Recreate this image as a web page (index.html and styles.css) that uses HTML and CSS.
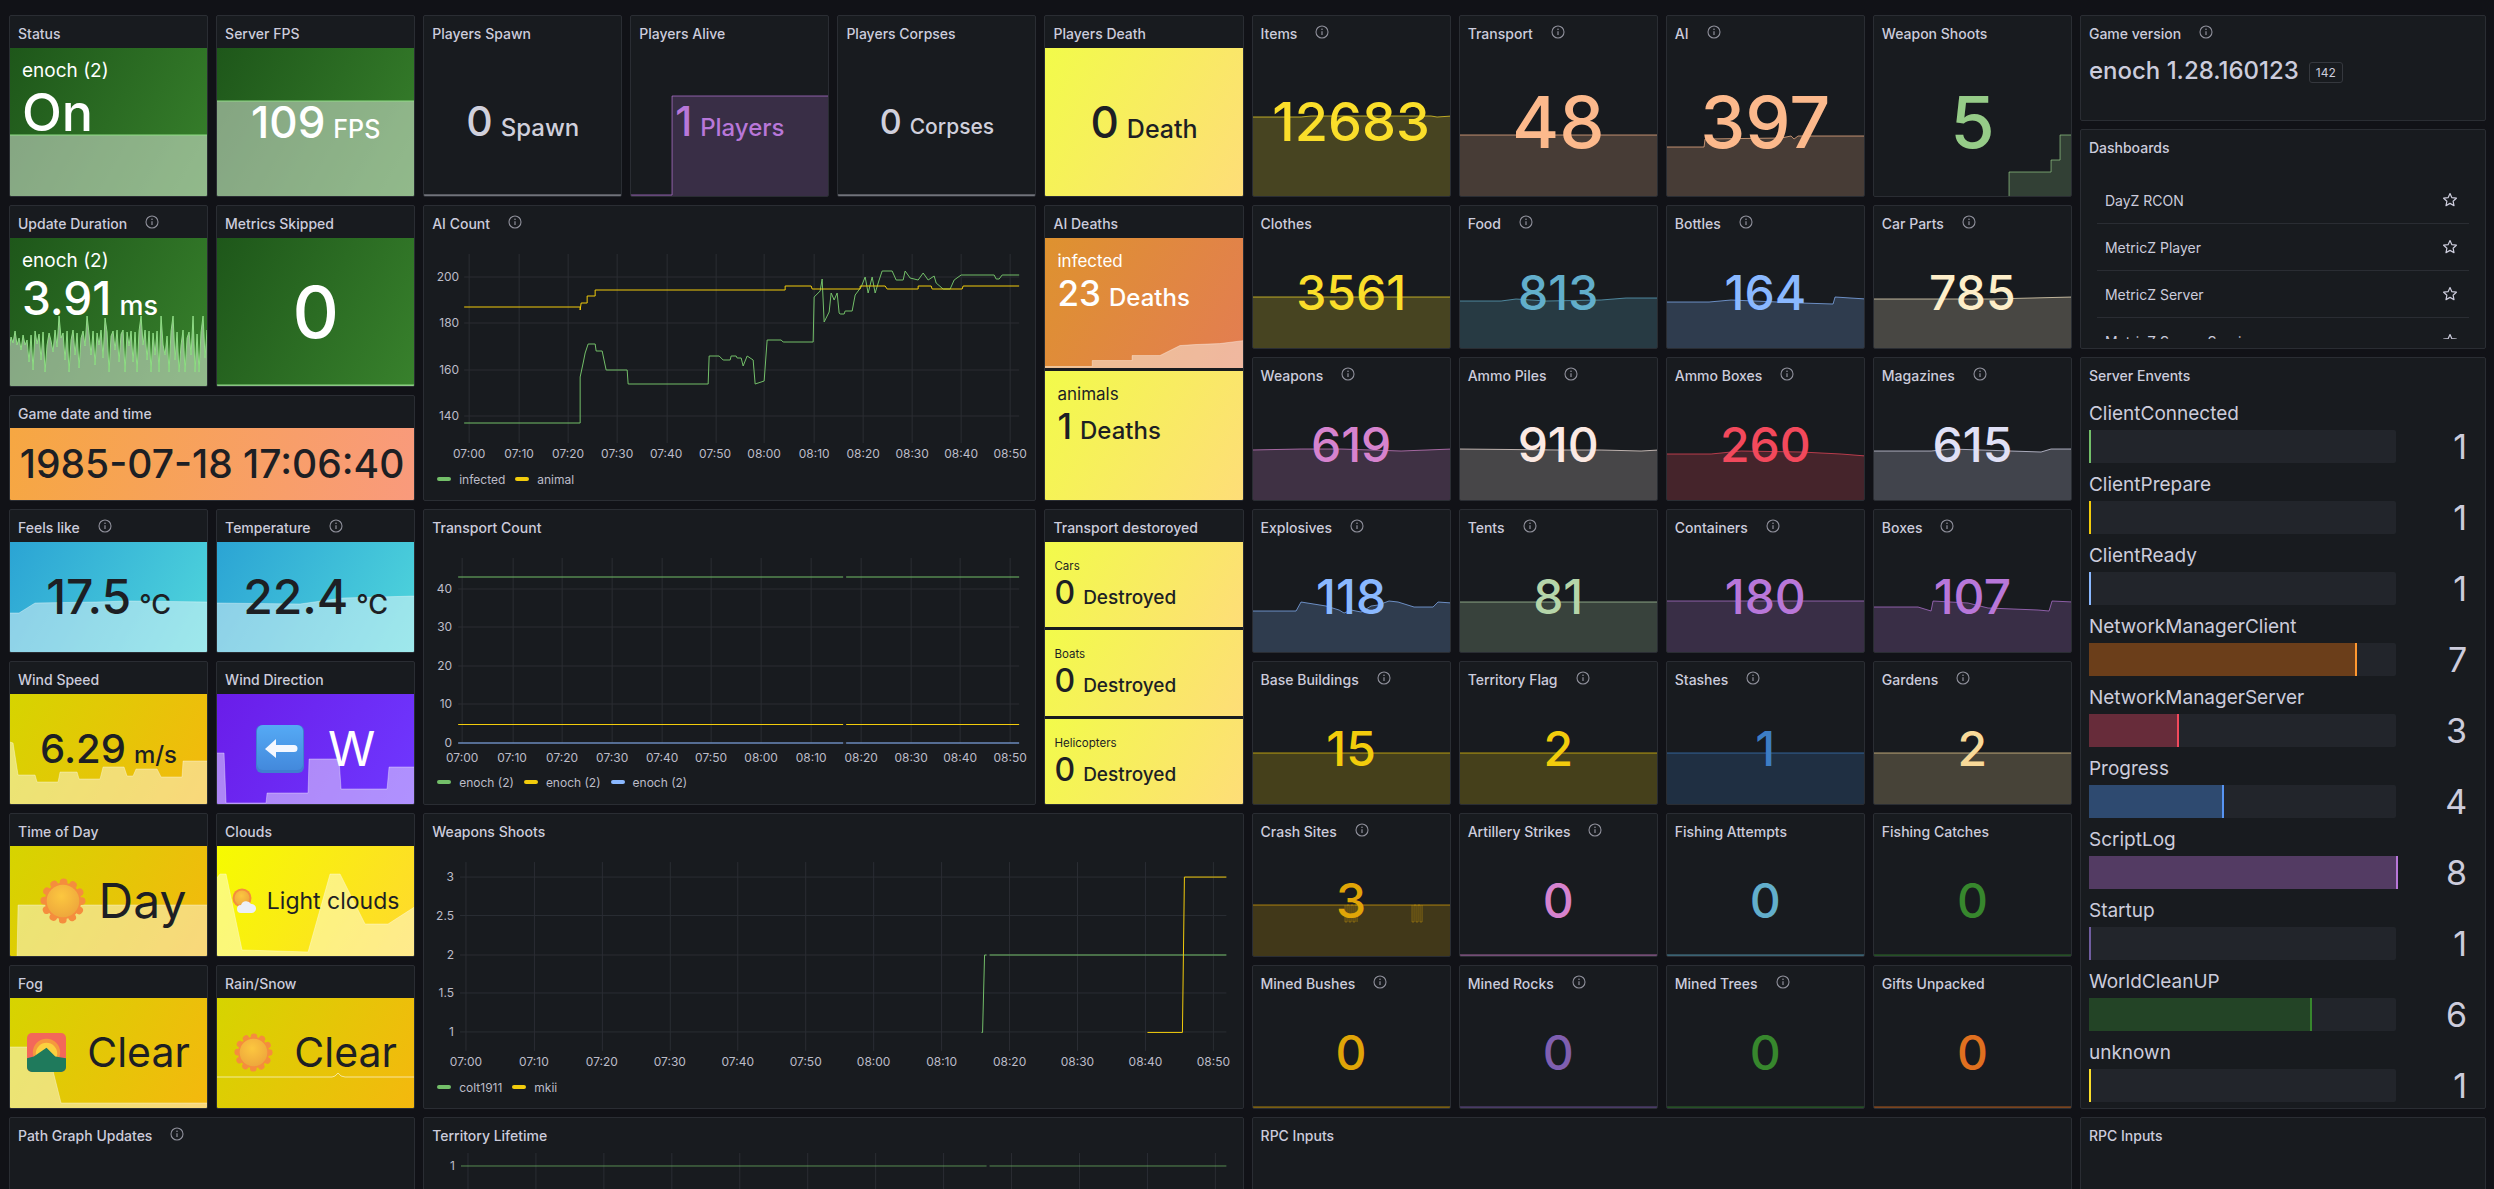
FILE: index.html
```html
<!DOCTYPE html>
<html lang="en">
<head>
    <meta charset="UTF-8">
    <meta name="viewport" content="width=device-width, initial-scale=1.0">
    <title>DayZ Server Overview</title>
    <link rel="stylesheet" href="styles.css">
</head>
<body>
    <svg class="defs" aria-hidden="true">
        <defs>
            <radialGradient id="sunCore" cx="45%" cy="35%" r="70%">
                <stop offset="0" stop-color="#fcc73f"/>
                <stop offset="1" stop-color="#eda53c"/>
            </radialGradient>
            <linearGradient id="keyBlue" x1="0" y1="0" x2="0" y2="1">
                <stop offset="0" stop-color="#55aaf5"/>
                <stop offset="1" stop-color="#4389dc"/>
            </linearGradient>
            <symbol id="i-info" viewBox="0 0 14 14">
                <circle cx="7" cy="7" r="6" fill="none" stroke="currentColor" stroke-width="1.1"/>
                <path d="M7 6.3v3.6" stroke="currentColor" stroke-width="1.2"/>
                <circle cx="7" cy="4.3" r=".8" fill="currentColor"/>
            </symbol>
            <symbol id="i-star" viewBox="0 0 16 16">
                <path d="M8 1.6l1.9 4.1 4.5.5-3.3 3 .9 4.4L8 11.4l-4 2.2.9-4.4-3.3-3 4.5-.5z" fill="none" stroke="currentColor" stroke-width="1.2" stroke-linejoin="round"/>
            </symbol>
            <symbol id="i-sun" viewBox="0 0 48 48">
                <circle cx="24" cy="24" r="19" fill="#f58d3d"/>
                <circle cx="24" cy="24" r="19.5" fill="none" stroke="#f58d3d" stroke-width="8" stroke-linecap="round" stroke-dasharray="0.1 10.11"/>
                <circle cx="24" cy="24" r="17" fill="url(#sunCore)"/>
            </symbol>
            <symbol id="i-sunrise" viewBox="0 0 40 40">
                <rect width="40" height="40" rx="5" fill="#f3685a"/>
                <circle cx="20" cy="20" r="14" fill="#f59a3d"/>
                <circle cx="20" cy="21" r="11" fill="#fbd03f"/>
                <path d="M0 26l7-2 13-9 9 9 11 2v9a5 5 0 0 1-5 5H5a5 5 0 0 1-5-5z" fill="#1f7a5c"/>
            </symbol>
            <symbol id="i-cloudsun" viewBox="0 0 24 28">
                <circle cx="10" cy="11" r="9.5" fill="#f58d3d"/>
                <circle cx="10" cy="11" r="7.5" fill="url(#sunCore)"/>
                <path d="M9 26a4 4 0 0 1 0-8 5.500 5.500 0 0 1 10-1 4.500 4.500 0 0 1 1 9z" fill="#eceff6"/>
            </symbol>
            <symbol id="i-arrowkey" viewBox="0 0 48 48">
                <rect x="0" y="0" width="48" height="48" rx="6" fill="#3f7fd0"/>
                <rect x="1" y="0" width="46" height="45" rx="6" fill="url(#keyBlue)"/>
                <path d="M9 24l11-10v6h18a3 3 0 0 1 0 7H20v6z" fill="#f4f7ff"/>
            </symbol>
        </defs>
    </svg>

    <main class="dash">

        <section class="panel x0 y0 w1 h5">
            <header class="ptitle">Status</header>
            <div class="stat named bg-green">
                <svg class="spark spark-w green-line" viewBox="10 48 197 148"><path d="M8 198V135H209V198Z"/></svg>
                <div class="name">enoch (2)</div>
                <div class="val f52">On</div>
            </div>
        </section>
        <section class="panel x1 y0 w1 h5">
            <header class="ptitle">Server FPS</header>
            <div class="stat bg-green">
                <svg class="spark spark-w green-line" viewBox="217 48 197 148"><path d="M215 198V101H416V198Z"/></svg>
                <div class="val f44">109<span class="unit u25">FPS</span></div>
            </div>
        </section>
        <section class="panel x2 y0 w1 h5">
            <header class="ptitle">Players Spawn</header>
            <div class="stat c-text">
                <svg class="spark" viewBox="424 48 197 148"><path d="M422 198V195H623V198Z"/></svg>
                <div class="val f41">0<span class="unit u24">Spawn</span></div>
            </div>
        </section>
        <section class="panel x3 y0 w1 h5">
            <header class="ptitle">Players Alive</header>
            <div class="stat c-purple">
                <svg class="spark" viewBox="631 48 197 148"><path d="M629 198V195H672V96H830V198Z"/></svg>
                <div class="val f41">1<span class="unit u24">Players</span></div>
            </div>
        </section>
        <section class="panel x4 y0 w1 h5">
            <header class="ptitle">Players Corpses</header>
            <div class="stat c-text">
                <svg class="spark" viewBox="838 48 197 148"><path d="M836 198V195H1037V198Z"/></svg>
                <div class="val f34">0<span class="unit u21">Corpses</span></div>
            </div>
        </section>
        <section class="panel x5 y0 w1 h5">
            <header class="ptitle">Players Death</header>
            <div class="stat bg-lemon c-dark">
                <div class="val f44">0<span class="unit u25">Death</span></div>
            </div>
        </section>
        <section class="panel x6 y0 w1 h5">
            <header class="ptitle">Items <svg class="info"><use href="#i-info"/></svg></header>
            <div class="stat c-yellow">
                <svg class="spark" viewBox="1252 48 197 148"><path d="M1250 198V117H1300L1310 116H1430L1436 117L1451 116V198Z"/></svg>
                <div class="val f54">12683</div>
            </div>
        </section>
        <section class="panel x7 y0 w1 h5">
            <header class="ptitle">Transport <svg class="info"><use href="#i-info"/></svg></header>
            <div class="stat c-peach">
                <svg class="spark" viewBox="1459 48 197 148"><path d="M1457 198V135H1658V198Z"/></svg>
                <div class="val f72">48</div>
            </div>
        </section>
        <section class="panel x8 y0 w1 h5">
            <header class="ptitle">AI <svg class="info"><use href="#i-info"/></svg></header>
            <div class="stat c-peach">
                <svg class="spark" viewBox="1666 48 197 148"><path d="M1664 198V147H1703L1704 139L1780 138L1790 136L1793 139L1797 136H1865V198Z"/></svg>
                <div class="val f72">397</div>
            </div>
        </section>
        <section class="panel x9 y0 w1 h5">
            <header class="ptitle">Weapon Shoots</header>
            <div class="stat c-lime">
                <svg class="spark" viewBox="1873 48 197 148"><path d="M2008 198V172H2050V160H2059V135H2072V198Z"/></svg>
                <div class="val f72">5</div>
            </div>
        </section>
        <section class="panel x10 y0 w2 h3">
            <header class="ptitle">Game version <svg class="info"><use href="#i-info"/></svg></header>
            <div class="version">
                <span>enoch 1.28.160123</span>
                <span class="badge">142</span>
            </div>
        </section>
        <section class="panel x10 y3 w2 h6">
            <header class="ptitle">Dashboards</header>
            <ul class="dashlist">
                <li>DayZ RCON <svg class="star"><use href="#i-star"/></svg></li>
                <li>MetricZ Player <svg class="star"><use href="#i-star"/></svg></li>
                <li>MetricZ Server <svg class="star"><use href="#i-star"/></svg></li>
                <li>MetricZ Server Services <svg class="star"><use href="#i-star"/></svg></li>
            </ul>
        </section>

        <section class="panel x0 y5 w1 h5">
            <header class="ptitle">Update Duration <svg class="info"><use href="#i-info"/></svg></header>
            <div class="stat named bg-green">
                <svg class="spark spark-w green-line" viewBox="10 238 197 148"><path d="M8 388V356L11 337 13 343 15 331 17 345 19 338 21 350 23 335 25 345 27 340 29 362 31 335 33 370 35 331 37 344 39 334 41 360 43 332 45 372 47 345 49 333 51 341 53 352 55 330 57 347 59 316 61 338 63 333 65 360 67 331 69 372 71 340 73 330 75 355 77 333 79 368 81 338 83 331 85 346 87 316 89 334 91 355 93 331 95 365 97 333 99 345 101 330 103 358 105 318 107 332 109 372 111 336 113 331 115 350 117 330 119 362 121 334 123 330 125 372 127 332 129 346 131 331 133 362 135 332 137 372 139 331 141 316 143 345 145 330 147 360 149 331 151 372 153 333 155 355 157 331 159 372 161 316 163 345 165 355 167 336 169 372 171 331 173 316 175 360 177 332 179 372 181 345 183 330 185 372 187 338 189 332 191 355 193 316 195 372 197 334 199 372 201 332 203 316 205 358 207 330 209 372V388Z"/></svg>
                <div class="name">enoch (2)</div>
                <div class="val f46 pull3">3.91<span class="unit u27">ms</span></div>
            </div>
        </section>
        <section class="panel x1 y5 w1 h5">
            <header class="ptitle">Metrics Skipped</header>
            <div class="stat bg-green">
                <svg class="spark spark-w green-line" viewBox="217 238 197 148"><path d="M215 388V385H416V388Z"/></svg>
                <div class="val f72 white">0</div>
            </div>
        </section>

        <section class="panel x2 y5 w3 h8">
            <header class="ptitle">AI Count <svg class="info"><use href="#i-info"/></svg></header>
            <svg class="chart ai-chart" viewBox="424 238 611 231">
                <path class="grid" d="M464 277H1019M464 323H1019M464 370H1019M464 416H1019M469 254V443M519 254V443M568 254V443M617 254V443M667 254V443M716 254V443M764 254V443M814 254V443M863 254V443M912 254V443M961 254V443M1010 254V443"/>
                <g class="axis">
                    <text class="end" x="459" y="281">200</text>
                    <text class="end" x="459" y="327">180</text>
                    <text class="end" x="459" y="374">160</text>
                    <text class="end" x="459" y="420">140</text>
                    <text x="469" y="458">07:00</text>
                    <text x="519" y="458">07:10</text>
                    <text x="568" y="458">07:20</text>
                    <text x="617" y="458">07:30</text>
                    <text x="666" y="458">07:40</text>
                    <text x="715" y="458">07:50</text>
                    <text x="764" y="458">08:00</text>
                    <text x="814" y="458">08:10</text>
                    <text x="863" y="458">08:20</text>
                    <text x="912" y="458">08:30</text>
                    <text x="961" y="458">08:40</text>
                    <text x="1010" y="458">08:50</text>
                </g>
                <polyline class="line l-green" points="464,423 580,423 580,377 583,363 585,353 588,344 595,344 596,351 602,351 606,370 627,370 628,384 708,384 709,356 719,356 723,360 730,360 731,356 736,356 737,358 741,358 743,366 747,356 753,360 755,384 764,381 767,340 781,340 783,342 813,342 814,297 820,291 822,279 824,322 829,312 831,293 834,300 837,293 839,313 840,314 844,314 845,311 852,311 855,295 861,287 865,277 868,293 872,277 875,293 879,280 882,271 892,271 896,280 903,280 905,271 910,278 918,280 923,273 928,280 934,276 936,283 943,289 950,289 954,280 961,275 994,275 996,279 999,279 1002,275 1019,275"/>
                <polyline class="line l-yellow" points="464,307 580,307 580,310 581,303 587,303 587,296 595,296 595,290 785,290 785,286 811,286 812,289 860,289 860,286 885,286 887,289 918,289 918,286 931,286 932,289 962,289 963,286 1019,286"/>
            </svg>
            <div class="legend">
                <span class="key"><i class="swatch k-green"></i>infected</span>
                <span class="key"><i class="swatch k-yellow"></i>animal</span>
            </div>
        </section>

        <section class="panel x5 y5 w1 h8">
            <header class="ptitle">AI Deaths</header>
            <div class="stack">
                <div class="stat named bg-orange">
                    <svg class="spark spark-w" viewBox="1045 238 197 130"><path d="M1043 370V367H1092V361H1132V356H1160L1174 349 1180 346 1195 345 1220 344 1244 341V370Z"/></svg>
                    <div class="name n18">infected</div>
                    <div class="val f35">23<span class="unit u24">Deaths</span></div>
                </div>
                <div class="stat named bg-lemon c-dark">
                    <div class="name n18">animals</div>
                    <div class="val f35">1<span class="unit u24">Deaths</span></div>
                </div>
            </div>
        </section>

        <section class="panel x0 y10 w2 h3">
            <header class="ptitle">Game date and time</header>
            <div class="stat bg-sunset c-dark">
                <div class="val f39">1985-07-18 17:06:40</div>
            </div>
        </section>

        <section class="panel x6 y5 w1 h4">
            <header class="ptitle">Clothes</header>
            <div class="stat c-yellow">
                <svg class="spark" viewBox="1252 238 197 110"><path d="M1250 350V297H1450V350Z"/></svg>
                <div class="val f48">3561</div>
            </div>
        </section>
        <section class="panel x7 y5 w1 h4">
            <header class="ptitle">Food <svg class="info"><use href="#i-info"/></svg></header>
            <div class="stat c-teal">
                <svg class="spark" viewBox="1459 238 197 110"><path d="M1457 350V301H1500L1515 299 1530 300 1545 301 1600 300 1625 298H1658V350Z"/></svg>
                <div class="val f48">813</div>
            </div>
        </section>
        <section class="panel x8 y5 w1 h4">
            <header class="ptitle">Bottles <svg class="info"><use href="#i-info"/></svg></header>
            <div class="stat c-blue">
                <svg class="spark" viewBox="1666 238 197 110"><path d="M1664 350V302H1708L1730 300 1800 303 1832 304 1834 297 1865 299V350Z"/></svg>
                <div class="val f48">164</div>
            </div>
        </section>
        <section class="panel x9 y5 w1 h4">
            <header class="ptitle">Car Parts <svg class="info"><use href="#i-info"/></svg></header>
            <div class="stat c-cream">
                <svg class="spark" viewBox="1873 238 197 110"><path d="M1871 350V299H1990L2072 297V350Z"/></svg>
                <div class="val f48">785</div>
            </div>
        </section>

        <section class="panel x6 y9 w1 h4">
            <header class="ptitle">Weapons <svg class="info"><use href="#i-info"/></svg></header>
            <div class="stat c-orchid">
                <svg class="spark" viewBox="1252 390 197 110"><path d="M1250 502V450L1300 449 1340 449 1400 451 1451 449V502Z"/></svg>
                <div class="val f48">619</div>
            </div>
        </section>
        <section class="panel x7 y9 w1 h4">
            <header class="ptitle">Ammo Piles <svg class="info"><use href="#i-info"/></svg></header>
            <div class="stat c-rose">
                <svg class="spark" viewBox="1459 390 197 110"><path d="M1457 502V449L1560 450 1600 450 1640 451 1658 450V502Z"/></svg>
                <div class="val f48">910</div>
            </div>
        </section>
        <section class="panel x8 y9 w1 h4">
            <header class="ptitle">Ammo Boxes <svg class="info"><use href="#i-info"/></svg></header>
            <div class="stat c-red">
                <svg class="spark" viewBox="1666 390 197 110"><path d="M1664 502V454H1710L1740 451 1800 452 1840 454 1865 456V502Z"/></svg>
                <div class="val f48">260</div>
            </div>
        </section>
        <section class="panel x9 y9 w1 h4">
            <header class="ptitle">Magazines <svg class="info"><use href="#i-info"/></svg></header>
            <div class="stat c-lavender">
                <svg class="spark" viewBox="1873 390 197 110"><path d="M1871 502V451H1930L1950 449 2040 452 2050 449H2072V502Z"/></svg>
                <div class="val f48">615</div>
            </div>
        </section>

        <section class="panel x10 y9 w2 h20">
            <header class="ptitle">Server Envents</header>
            <div class="bars">
                <div class="barrow"><div class="barname">ClientConnected</div><div class="barline"><div class="track"><div class="fill b-green" style="width:0%"></div></div><span class="barval">1</span></div></div>
                <div class="barrow"><div class="barname">ClientPrepare</div><div class="barline"><div class="track"><div class="fill b-yellow" style="width:0%"></div></div><span class="barval">1</span></div></div>
                <div class="barrow"><div class="barname">ClientReady</div><div class="barline"><div class="track"><div class="fill b-sky" style="width:0%"></div></div><span class="barval">1</span></div></div>
                <div class="barrow"><div class="barname">NetworkManagerClient</div><div class="barline"><div class="track"><div class="fill b-orange" style="width:86.600%"></div></div><span class="barval">7</span></div></div>
                <div class="barrow"><div class="barname">NetworkManagerServer</div><div class="barline"><div class="track"><div class="fill b-red" style="width:28.700%"></div></div><span class="barval">3</span></div></div>
                <div class="barrow"><div class="barname">Progress</div><div class="barline"><div class="track"><div class="fill b-blue" style="width:43.200%"></div></div><span class="barval">4</span></div></div>
                <div class="barrow"><div class="barname">ScriptLog</div><div class="barline"><div class="track"><div class="fill b-purple" style="width:100%"></div></div><span class="barval">8</span></div></div>
                <div class="barrow"><div class="barname">Startup</div><div class="barline"><div class="track"><div class="fill b-violet" style="width:0%"></div></div><span class="barval">1</span></div></div>
                <div class="barrow"><div class="barname">WorldCleanUP</div><div class="barline"><div class="track"><div class="fill b-forest" style="width:72%"></div></div><span class="barval">6</span></div></div>
                <div class="barrow"><div class="barname">unknown</div><div class="barline"><div class="track"><div class="fill b-lemon" style="width:0%"></div></div><span class="barval">1</span></div></div>
            </div>
        </section>

        <section class="panel x0 y13 w1 h4">
            <header class="ptitle">Feels like <svg class="info"><use href="#i-info"/></svg></header>
            <div class="stat bg-cyan c-dark">
                <svg class="spark spark-w" viewBox="10 542 197 110"><path d="M8 654V613H19L35 603 96 602 129 601 209 602V654Z"/></svg>
                <div class="val f48">17.5<span class="unit u27">°C</span></div>
            </div>
        </section>
        <section class="panel x1 y13 w1 h4">
            <header class="ptitle">Temperature <svg class="info"><use href="#i-info"/></svg></header>
            <div class="stat bg-cyan c-dark">
                <svg class="spark spark-w" viewBox="217 542 197 110"><path d="M215 654V603L300 604 343 598 416 596V654Z"/></svg>
                <div class="val f48">22.4<span class="unit u27">°C</span></div>
            </div>
        </section>

        <section class="panel x2 y13 w3 h8">
            <header class="ptitle">Transport Count</header>
            <svg class="chart tr-chart" viewBox="424 542 611 230">
                <path class="grid" d="M458 589H1019M458 627H1019M458 666H1019M458 704H1019M458 743H1019M462 558V743M513 558V743M562 558V743M612 558V743M662 558V743M711 558V743M761 558V743M811 558V743M861 558V743M911 558V743M960 558V743M1010 558V743"/>
                <g class="axis">
                    <text class="end" x="452" y="593">40</text>
                    <text class="end" x="452" y="631">30</text>
                    <text class="end" x="452" y="670">20</text>
                    <text class="end" x="452" y="708">10</text>
                    <text class="end" x="452" y="747">0</text>
                    <text x="462" y="762">07:00</text>
                    <text x="512" y="762">07:10</text>
                    <text x="562" y="762">07:20</text>
                    <text x="612" y="762">07:30</text>
                    <text x="662" y="762">07:40</text>
                    <text x="711" y="762">07:50</text>
                    <text x="761" y="762">08:00</text>
                    <text x="811" y="762">08:10</text>
                    <text x="861" y="762">08:20</text>
                    <text x="911" y="762">08:30</text>
                    <text x="960" y="762">08:40</text>
                    <text x="1010" y="762">08:50</text>
                </g>
                <path class="line l-green" d="M458 577H843M846 577H1019"/>
                <path class="line l-yellow" d="M458 724.500H843M846 724.500H1019"/>
                <path class="line l-sky" d="M458 743H843M846 743H1019"/>
            </svg>
            <div class="legend">
                <span class="key"><i class="swatch k-green"></i>enoch (2)</span>
                <span class="key"><i class="swatch k-yellow"></i>enoch (2)</span>
                <span class="key"><i class="swatch k-sky"></i>enoch (2)</span>
            </div>
        </section>

        <section class="panel x5 y13 w1 h8">
            <header class="ptitle">Transport destoroyed</header>
            <div class="stack">
                <div class="stat named bg-lemon c-dark small-stat">
                    <div class="name n12">Cars</div>
                    <div class="val f32">0<span class="unit u19">Destroyed</span></div>
                </div>
                <div class="stat named bg-lemon c-dark small-stat">
                    <div class="name n12">Boats</div>
                    <div class="val f32">0<span class="unit u19">Destroyed</span></div>
                </div>
                <div class="stat named bg-lemon c-dark small-stat">
                    <div class="name n12">Helicopters</div>
                    <div class="val f32">0<span class="unit u19">Destroyed</span></div>
                </div>
            </div>
        </section>

        <section class="panel x6 y13 w1 h4">
            <header class="ptitle">Explosives <svg class="info"><use href="#i-info"/></svg></header>
            <div class="stat c-blue">
                <svg class="spark" viewBox="1252 542 197 110"><path d="M1250 654V611H1295L1300 602 1325 606 1338 610 1343 613 1350 610 1360 612 1370 606 1377 605 1388 601 1397 602 1413 607 1432 607 1437 602 1451 603V654Z"/></svg>
                <div class="val f48">118</div>
            </div>
        </section>
        <section class="panel x7 y13 w1 h4">
            <header class="ptitle">Tents <svg class="info"><use href="#i-info"/></svg></header>
            <div class="stat c-sage">
                <svg class="spark" viewBox="1459 542 197 110"><path d="M1457 654V602H1658V654Z"/></svg>
                <div class="val f48">81</div>
            </div>
        </section>
        <section class="panel x8 y13 w1 h4">
            <header class="ptitle">Containers <svg class="info"><use href="#i-info"/></svg></header>
            <div class="stat c-purple">
                <svg class="spark" viewBox="1666 542 197 110"><path d="M1664 654V601H1865V654Z"/></svg>
                <div class="val f48">180</div>
            </div>
        </section>
        <section class="panel x9 y13 w1 h4">
            <header class="ptitle">Boxes <svg class="info"><use href="#i-info"/></svg></header>
            <div class="stat c-purple">
                <svg class="spark" viewBox="1873 542 197 110"><path d="M1871 654V607H1917L1930 611 1932 601 1967 603 1987 608 2037 610 2048 611 2051 601 2072 602V654Z"/></svg>
                <div class="val f48">107</div>
            </div>
        </section>

        <section class="panel x0 y17 w1 h4">
            <header class="ptitle">Wind Speed</header>
            <div class="stat bg-amber c-dark">
                <svg class="spark spark-w" viewBox="10 694 197 110"><path d="M8 806V742H10L13 743 18 775H35L37 782H58L60 772H77L79 779H100L103 767H124L127 776H133L136 769H157L161 777H182L183 761H209V806Z"/></svg>
                <div class="val f40">6.29<span class="unit u24">m/s</span></div>
            </div>
        </section>
        <section class="panel x1 y17 w1 h4">
            <header class="ptitle">Wind Direction</header>
            <div class="stat bg-violet white">
                <svg class="spark spark-w" viewBox="217 694 197 110"><path d="M215 806V753H224L226 803H266L267 793H308L309 759H339L341 789H387L389 767H416V806Z"/></svg>
                <div class="val f48 icon-val"><svg class="emoji e48"><use href="#i-arrowkey"/></svg>W</div>
            </div>
        </section>

        <section class="panel x6 y17 w1 h4">
            <header class="ptitle">Base Buildings <svg class="info"><use href="#i-info"/></svg></header>
            <div class="stat c-gold">
                <svg class="spark" viewBox="1252 694 197 110"><path d="M1250 806V753H1451V806Z"/></svg>
                <div class="val f48">15</div>
            </div>
        </section>
        <section class="panel x7 y17 w1 h4">
            <header class="ptitle">Territory Flag <svg class="info"><use href="#i-info"/></svg></header>
            <div class="stat c-gold">
                <svg class="spark" viewBox="1459 694 197 110"><path d="M1457 806V753H1658V806Z"/></svg>
                <div class="val f48">2</div>
            </div>
        </section>
        <section class="panel x8 y17 w1 h4">
            <header class="ptitle">Stashes <svg class="info"><use href="#i-info"/></svg></header>
            <div class="stat c-ocean">
                <svg class="spark" viewBox="1666 694 197 110"><path d="M1664 806V753H1865V806Z"/></svg>
                <div class="val f48">1</div>
            </div>
        </section>
        <section class="panel x9 y17 w1 h4">
            <header class="ptitle">Gardens <svg class="info"><use href="#i-info"/></svg></header>
            <div class="stat c-sand">
                <svg class="spark" viewBox="1873 694 197 110"><path d="M1871 806V753H2072V806Z"/></svg>
                <div class="val f48">2</div>
            </div>
        </section>

        <section class="panel x0 y21 w1 h4">
            <header class="ptitle">Time of Day</header>
            <div class="stat bg-amber c-dark">
                <svg class="spark spark-w" viewBox="10 846 197 110"><path d="M8 958H17L18 905H209V958Z"/></svg>
                <div class="val f48 icon-val"><svg class="emoji e46"><use href="#i-sun"/></svg>Day</div>
            </div>
        </section>
        <section class="panel x1 y21 w1 h4">
            <header class="ptitle">Clouds</header>
            <div class="stat bg-bright c-dark">
                <svg class="spark spark-w" viewBox="217 846 197 110"><path d="M215 958V880L220 874H226L242 950 277 951 308 952 330 874H340L365 924H388L416 906V958Z"/></svg>
                <div class="val f23 icon-val"><svg class="emoji e24"><use href="#i-cloudsun"/></svg>Light clouds</div>
            </div>
        </section>

        <section class="panel x2 y21 w4 h8">
            <header class="ptitle">Weapons Shoots</header>
            <svg class="chart we-chart" viewBox="424 846 819 231">
                <path class="grid" d="M460 877H1227M460 915.500H1227M460 955H1227M460 993H1227M460 1032H1227M466 862V1051M534.500 862V1051M602.500 862V1051M670.500 862V1051M738 862V1051M806 862V1051M874 862V1051M942 862V1051M1010 862V1051M1078 862V1051M1146 862V1051M1214 862V1051"/>
                <g class="axis">
                    <text class="end" x="454" y="881">3</text>
                    <text class="end" x="454" y="920">2.5</text>
                    <text class="end" x="454" y="959">2</text>
                    <text class="end" x="454" y="997">1.5</text>
                    <text class="end" x="454" y="1036">1</text>
                    <text x="466" y="1066">07:00</text>
                    <text x="534" y="1066">07:10</text>
                    <text x="602" y="1066">07:20</text>
                    <text x="670" y="1066">07:30</text>
                    <text x="738" y="1066">07:40</text>
                    <text x="806" y="1066">07:50</text>
                    <text x="874" y="1066">08:00</text>
                    <text x="942" y="1066">08:10</text>
                    <text x="1010" y="1066">08:20</text>
                    <text x="1078" y="1066">08:30</text>
                    <text x="1146" y="1066">08:40</text>
                    <text x="1214" y="1066">08:50</text>
                </g>
                <path class="line l-green" d="M982 1032.500H983L985 955H987M990 955H1227"/>
                <path class="line l-yellow" d="M1148 1032.500H1183L1185 877H1227"/>
            </svg>
            <div class="legend">
                <span class="key"><i class="swatch k-green"></i>colt1911</span>
                <span class="key"><i class="swatch k-yellow"></i>mkii</span>
            </div>
        </section>

        <section class="panel x6 y21 w1 h4">
            <header class="ptitle">Crash Sites <svg class="info"><use href="#i-info"/></svg></header>
            <div class="stat c-mustard">
                <svg class="spark" viewBox="1252 846 197 110">
                    <path d="M1250 958V905H1451V958Z"/>
                    <path class="nofill" d="M1344 905V922H1346V905H1348V922H1350V905H1352V922H1354V905H1356V922M1411 905V922H1413V905H1415V922H1417V905H1419V922H1421V905"/>
                </svg>
                <div class="val f48">3</div>
            </div>
        </section>
        <section class="panel x7 y21 w1 h4">
            <header class="ptitle">Artillery Strikes <svg class="info"><use href="#i-info"/></svg></header>
            <div class="stat c-orchid">
                <svg class="spark" viewBox="1459 846 197 110"><path d="M1457 958V955H1658V958Z"/></svg>
                <div class="val f48">0</div>
            </div>
        </section>
        <section class="panel x8 y21 w1 h4">
            <header class="ptitle">Fishing Attempts</header>
            <div class="stat c-teal">
                <svg class="spark" viewBox="1666 846 197 110"><path d="M1664 958V955H1865V958Z"/></svg>
                <div class="val f48">0</div>
            </div>
        </section>
        <section class="panel x9 y21 w1 h4">
            <header class="ptitle">Fishing Catches</header>
            <div class="stat c-forest">
                <svg class="spark" viewBox="1873 846 197 110"><path d="M1871 958V955H2072V958Z"/></svg>
                <div class="val f48">0</div>
            </div>
        </section>

        <section class="panel x0 y25 w1 h4">
            <header class="ptitle">Fog</header>
            <div class="stat bg-amber c-dark">
                <svg class="spark spark-w" viewBox="10 998 197 110"><path d="M8 1110V1047H47L61 1103H209V1110Z"/></svg>
                <div class="val f41 icon-val"><svg class="emoji e40"><use href="#i-sunrise"/></svg>Clear</div>
            </div>
        </section>
        <section class="panel x1 y25 w1 h4">
            <header class="ptitle">Rain/Snow</header>
            <div class="stat bg-amber c-dark">
                <svg class="spark spark-thin" viewBox="217 998 197 110"><path d="M215 1077H332L335 1076 338 1073 341 1076 345 1077H416"/></svg>
                <div class="val f41 icon-val"><svg class="emoji e40"><use href="#i-sun"/></svg>Clear</div>
            </div>
        </section>
        <section class="panel x6 y25 w1 h4">
            <header class="ptitle">Mined Bushes <svg class="info"><use href="#i-info"/></svg></header>
            <div class="stat c-mustard">
                <svg class="spark" viewBox="1252 998 197 110"><path d="M1250 1110V1107H1451V1110Z"/></svg>
                <div class="val f48">0</div>
            </div>
        </section>
        <section class="panel x7 y25 w1 h4">
            <header class="ptitle">Mined Rocks <svg class="info"><use href="#i-info"/></svg></header>
            <div class="stat c-amethyst">
                <svg class="spark" viewBox="1459 998 197 110"><path d="M1457 1110V1107H1658V1110Z"/></svg>
                <div class="val f48">0</div>
            </div>
        </section>
        <section class="panel x8 y25 w1 h4">
            <header class="ptitle">Mined Trees <svg class="info"><use href="#i-info"/></svg></header>
            <div class="stat c-forest">
                <svg class="spark" viewBox="1666 998 197 110"><path d="M1664 1110V1107H1865V1110Z"/></svg>
                <div class="val f48">0</div>
            </div>
        </section>
        <section class="panel x9 y25 w1 h4">
            <header class="ptitle">Gifts Unpacked</header>
            <div class="stat c-tangerine">
                <svg class="spark" viewBox="1873 998 197 110"><path d="M1871 1110V1107H2072V1110Z"/></svg>
                <div class="val f48">0</div>
            </div>
        </section>

        <section class="panel x0 y29 w2 h8">
            <header class="ptitle">Path Graph Updates <svg class="info"><use href="#i-info"/></svg></header>
        </section>
        <section class="panel x2 y29 w4 h8">
            <header class="ptitle">Territory Lifetime</header>
            <svg class="chart" viewBox="424 1150 819 40">
                <path class="grid" d="M468 1153V1190M536 1153V1190M604 1153V1190M672 1153V1190M740 1153V1190M808 1153V1190M876 1153V1190M944 1153V1190M1012 1153V1190M1080 1153V1190M1148 1153V1190M1216 1153V1190"/>
                <g class="axis"><text class="end" x="455" y="1170">1</text></g>
                <path class="line l-green dim" d="M461 1166H987M990 1166H1227"/>
            </svg>
        </section>
        <section class="panel x6 y29 w4 h8">
            <header class="ptitle">RPC Inputs</header>
        </section>
        <section class="panel x10 y29 w2 h8">
            <header class="ptitle">RPC Inputs</header>
        </section>
    </main>
</body>
</html>
```

FILE: styles.css
```css
html, body {
    margin: 0;
    height: 100%;
    overflow: hidden;
    background: #111217;
}
body {
    font-family: Inter, "Noto Sans", sans-serif;
    color: #ccccdc;
}
.defs {
    position: absolute;
    width: 0;
    height: 0;
}

/* dashboard grid: 12 columns, 38px row step */
.dash {
    display: grid;
    grid-template-columns: repeat(12, 199.100px);
    grid-auto-rows: 30px;
    gap: 8px;
    padding: 15px 0 0 9px;
}
.x0 { grid-column-start: 1; }
.x1 { grid-column-start: 2; }
.x2 { grid-column-start: 3; }
.x3 { grid-column-start: 4; }
.x4 { grid-column-start: 5; }
.x5 { grid-column-start: 6; }
.x6 { grid-column-start: 7; }
.x7 { grid-column-start: 8; }
.x8 { grid-column-start: 9; }
.x9 { grid-column-start: 10; }
.x10 { grid-column-start: 11; }
.w1 { grid-column-end: span 1; }
.w2 { grid-column-end: span 2; }
.w3 { grid-column-end: span 3; }
.w4 { grid-column-end: span 4; }
.y0 { grid-row-start: 1; }
.y3 { grid-row-start: 4; }
.y5 { grid-row-start: 6; }
.y9 { grid-row-start: 10; }
.y10 { grid-row-start: 11; }
.y13 { grid-row-start: 14; }
.y17 { grid-row-start: 18; }
.y21 { grid-row-start: 22; }
.y25 { grid-row-start: 26; }
.y29 { grid-row-start: 30; }
.h3 { grid-row-end: span 3; }
.h4 { grid-row-end: span 4; }
.h5 { grid-row-end: span 5; }
.h6 { grid-row-end: span 6; }
.h8 { grid-row-end: span 8; }
.h20 { grid-row-end: span 20; }

.panel {
    display: flex;
    flex-direction: column;
    min-width: 0;
    min-height: 0;
    overflow: hidden;
    background: #181b1f;
    border: 1px solid #2a2d33;
    border-radius: 2px;
}
.ptitle {
    flex: none;
    display: flex;
    align-items: center;
    height: 30px;
    padding: 2px 8px 0;
    font-size: 14px;
    font-weight: 500;
    white-space: nowrap;
}
.info {
    width: 14px;
    height: 14px;
    margin-left: 18px;
    margin-top: -3px;
    color: #8f909b;
}

/* stat boxes */
.stat {
    position: relative;
    flex: 1;
    min-height: 0;
    display: flex;
    align-items: center;
    justify-content: center;
    overflow: hidden;
}
.stat.named {
    flex-direction: column;
    align-items: flex-start;
    justify-content: flex-start;
    padding: 11px 12px 0;
}
.spark {
    position: absolute;
    top: 0;
    left: 0;
    width: 100%;
    height: 100%;
}
.spark path {
    fill: currentColor;
    fill-opacity: .21;
    stroke: currentColor;
    stroke-width: 1;
    stroke-opacity: .7;
}
.spark path.nofill {
    fill: none;
    stroke-width: .6;
}
.spark-w path {
    fill: #fff;
    fill-opacity: .45;
    stroke: #fff;
    stroke-opacity: .35;
}
.green-line path {
    stroke: #8fdc85;
    stroke-opacity: 1;
}
.spark-thin path {
    fill: none;
    stroke: #fff;
    stroke-opacity: .6;
}
.val {
    position: relative;
    display: flex;
    align-items: baseline;
    line-height: 1.15;
    font-weight: 500;
    white-space: nowrap;
}
.name {
    position: relative;
    font-size: 19px;
    line-height: 24px;
    font-weight: 400;
    color: inherit;
}
.n18 { font-size: 17px; }
.n12 { font-size: 11.500px; line-height: 24px; }
.unit {
    margin-left: 8px;
    font-weight: 500;
}
.pull3 { margin-top: -1px; }
.white { color: #fff; }

.f23 { font-size: 23px; }
.f32 { font-size: 32px; }
.f34 { font-size: 34px; }
.f35 { font-size: 35px; }
.f39 { font-size: 39px; }
.f40 { font-size: 40px; }
.f41 { font-size: 41px; }
.f44 { font-size: 44px; }
.f46 { font-size: 46px; }
.f48 { font-size: 48px; }
.f52 { font-size: 52px; }
.f54 { font-size: 54px; }
.f72 { font-size: 72px; }
.u19 { font-size: 19px; }
.u21 { font-size: 21px; }
.u24 { font-size: 24px; }
.u25 { font-size: 25px; }
.u27 { font-size: 27px; }

/* backgrounds */
.bg-green { background: linear-gradient(120deg, #1e571a, #38812c); color: #fff; }
.bg-lemon { background: linear-gradient(120deg, #f2fb4a, #fedd78); }
.bg-orange { background: linear-gradient(120deg, #de922f, #e37d52); color: #fff; }
.bg-sunset { background: linear-gradient(100deg, #f6a742, #f99a7c); }
.bg-cyan { background: linear-gradient(120deg, #2ba4d4, #50d6dc); }
.bg-amber { background: linear-gradient(120deg, #d6d400, #f4b80e); }
.bg-violet { background: linear-gradient(120deg, #6a1de9, #6f38ff); }
.bg-bright { background: linear-gradient(120deg, #f6fb00, #ffd82e); }

/* text colours */
.c-text { color: #d0d0dc; }
.c-dark { color: #1d1f24; }
.c-purple { color: #b877d9; }
.c-yellow { color: #fade2a; }
.c-peach { color: #fcb98c; }
.c-lime { color: #96cc88; }
.c-teal { color: #62aecb; }
.c-blue { color: #8ab8ff; }
.c-cream { color: #fdeec9; }
.c-orchid { color: #d683ce; }
.c-rose { color: #fbe9e3; }
.c-red { color: #f2495c; }
.c-lavender { color: #e0e0f5; }
.c-sage { color: #b5d5a9; }
.c-gold { color: #f2cc0c; }
.c-ocean { color: #3d7dc4; }
.c-sand { color: #f8d998; }
.c-mustard { color: #e0a507; }
.c-forest { color: #37872d; }
.c-amethyst { color: #7f5fb0; }
.c-tangerine { color: #e0701f; }

/* emoji-like pictures next to a value */
.icon-val {
    align-items: center;
    font-weight: 400;
}
.emoji { flex: none; }
.e24 { width: 24px; height: 28px; margin-right: 11px; }
.e40 { width: 39px; height: 39px; margin-right: 21px; }
.e46 { width: 46px; height: 46px; margin: 0 13px 0 9px; }
.e48 { width: 48px; height: 48px; margin-right: 24px; }

.stack {
    flex: 1;
    min-height: 0;
    display: flex;
    flex-direction: column;
    gap: 3px;
}
.stack .stat { flex: 1; }
.small-stat.named { padding-top: 12px; padding-left: 9px; }
.small-stat .val { margin-top: -3px; }

/* game version */
.version {
    display: flex;
    align-items: center;
    gap: 10px;
    margin-top: 8px;
    padding: 0 8px;
    font-size: 24px;
    font-weight: 500;
}
.badge {
    margin-top: 4px;
    padding: 2px 6px;
    font-size: 12px;
    font-weight: 400;
    border: 1px solid #35383e;
    border-radius: 3px;
}

/* dashboard list, clipped like the scrolling panel */
.dashlist {
    flex: none;
    height: 162px;
    overflow: hidden;
    margin: 15px 0 0;
    padding: 0 16px;
    list-style: none;
    font-size: 14px;
}
.dashlist li {
    display: flex;
    align-items: center;
    justify-content: space-between;
    box-sizing: border-box;
    height: 47px;
    padding: 0 11px 0 8px;
    border-bottom: 1px solid #2a2d33;
}
.star {
    width: 16px;
    height: 16px;
    color: #ccccdc;
}

/* server events */
.bars {
    display: flex;
    flex-direction: column;
    padding: 11px 8px 0;
}
.barrow {
    height: 71px;
}
.barname {
    font-size: 19px;
    line-height: 26px;
    white-space: nowrap;
}
.barline {
    display: flex;
    align-items: center;
    margin-top: 3px;
}
.track {
    width: 307px;
    height: 33px;
    background: #22252b;
    border-radius: 2px;
}
.fill {
    box-sizing: content-box;
    height: 100%;
    border-right: 2px solid;
}
.barval {
    margin-left: auto;
    padding-right: 10px;
    font-size: 34px;
    line-height: 33px;
}
.b-green { border-color: #73bf69; }
.b-yellow { border-color: #f2cc0c; }
.b-sky { border-color: #8ab8ff; }
.b-orange { border-color: #ff9830; background: #6b3e1a; }
.b-red { border-color: #f2495c; background: #672c3a; }
.b-blue { border-color: #5794f2; background: #2e4a70; }
.b-purple { border-color: #b877d9; background: #533b63; }
.b-violet { border-color: #705da0; }
.b-forest { border-color: #37872d; background: #234426; }
.b-lemon { border-color: #fade2a; }

/* time series */
.chart {
    flex: none;
    display: block;
    width: 100%;
}
.ai-chart { height: 231px; }
.tr-chart { height: 230px; }
.we-chart { height: 231px; }
.grid {
    fill: none;
    stroke: #2a2d33;
    stroke-width: 1;
}
.axis text {
    font-size: 12px;
    fill: #bcbcc8;
    text-anchor: middle;
}
.axis text.end { text-anchor: end; }
.line {
    fill: none;
    stroke-width: 1;
}
.l-green { stroke: #73bf69; }
.l-yellow { stroke: #f2cc0c; }
.l-sky { stroke: #8ab8ff; }
.dim { stroke-opacity: .7; }

.legend {
    display: flex;
    gap: 10px;
    height: 20px;
    align-items: center;
    padding-left: 13px;
    font-size: 12px;
    color: #bcbcc8;
}
.key {
    display: flex;
    align-items: center;
}
.swatch {
    width: 14px;
    height: 4px;
    margin-right: 8px;
    border-radius: 2px;
}
.k-green { background: #73bf69; }
.k-yellow { background: #f2cc0c; }
.k-sky { background: #8ab8ff; }
```
